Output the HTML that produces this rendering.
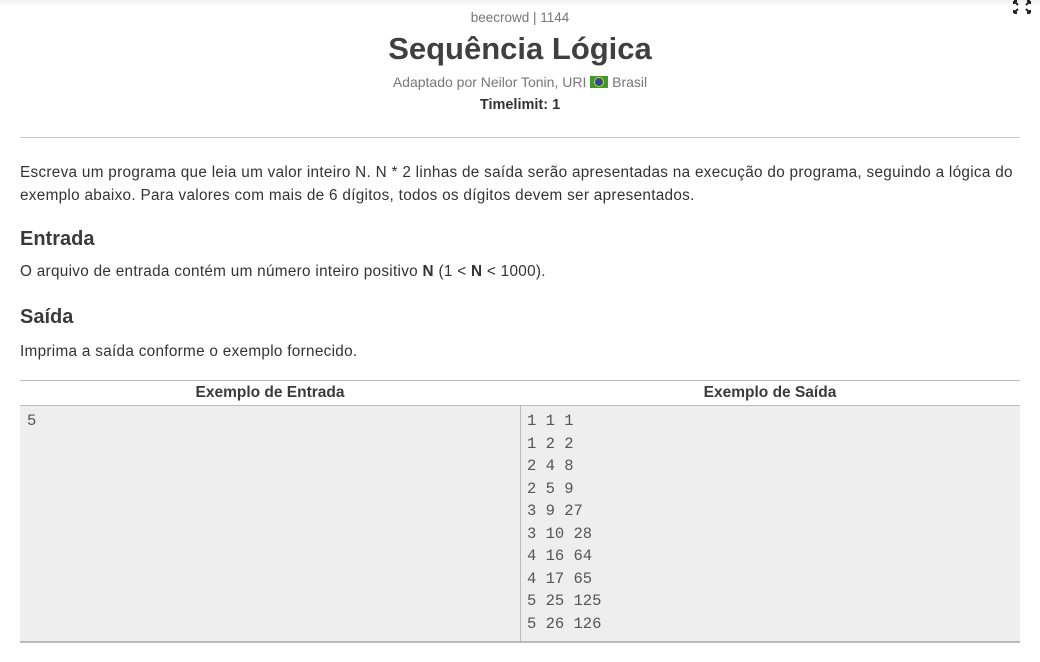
<!DOCTYPE html>
<html><head><meta charset="utf-8"><style>
*{margin:0;padding:0;box-sizing:border-box}
body{width:1040px;height:662px;overflow:hidden;background:#fff;font-family:"Liberation Sans",sans-serif;color:#333;position:relative}
.a{position:absolute;white-space:nowrap}
.c{left:0;width:1040px;text-align:center}
.p{font-size:15.3px;letter-spacing:0.3px;color:#333;left:20px}
h3{position:absolute;left:20px;font-size:20px;font-weight:bold;color:#3a3a3a}
.mono{font-family:"Liberation Mono",monospace;font-size:15.5px;color:#555;line-height:22.5px}
</style></head><body>
<div style="position:absolute;top:0;left:0;width:1040px;height:6px;background:linear-gradient(#f0f0f0,#fff)"></div>
<div class="a c" style="top:10px;font-size:13.5px;color:#777">beecrowd | 1144</div>
<div class="a c" style="top:31px;font-size:31px;font-weight:bold;color:#404040">Sequência Lógica</div>
<div class="a c" style="top:74px;font-size:14px;color:#777">Adaptado por Neilor Tonin, URI <span style="display:inline-block;width:18px;height:12px;background:#3a9a2a;position:relative;vertical-align:-1px"><span style="position:absolute;left:5px;top:2px;width:8px;height:8px;border-radius:50%;background:#2a4aa0;box-shadow:0 0 0 1px #e8d020"></span></span> Brasil</div>
<div class="a c" style="top:97px;font-size:14.5px;font-weight:bold;color:#333">Timelimit: 1</div>
<svg class="a" style="left:1013px;top:0" width="18" height="14" viewBox="0 0 18 14"><path d="M1 1l4 4M1 1h3M1 1v3M17 1l-4 4M17 1h-3M17 1v3M1 13l4-4M1 13h3M1 13v-3M17 13l-4-4M17 13h-3M17 13v-3" stroke="#222" stroke-width="2" fill="none"/></svg>
<div class="a" style="left:20px;top:137px;width:1000px;height:1px;background:#ccc"></div>
<div class="a p" style="top:161px;line-height:23px">Escreva um programa que leia um valor inteiro N. N * 2 linhas de saída serão apresentadas na execução do programa, seguindo a lógica do<br>exemplo abaixo. Para valores com mais de 6 dígitos, todos os dígitos devem ser apresentados.</div>
<h3 style="top:228px">Entrada</h3>
<div class="a p" style="top:263px">O arquivo de entrada contém um número inteiro positivo <b>N</b> (1 &lt; <b>N</b> &lt; 1000).</div>
<h3 style="top:306px">Saída</h3>
<div class="a p" style="top:343px">Imprima a saída conforme o exemplo fornecido.</div>
<div class="a" style="left:20px;top:380px;width:1000px;height:1px;background:#bbb"></div>
<div class="a" style="left:20px;top:384px;width:500px;text-align:center;font-size:15.5px;font-weight:bold;color:#3a3a3a">Exemplo de Entrada</div>
<div class="a" style="left:520px;top:384px;width:500px;text-align:center;font-size:15.5px;font-weight:bold;color:#3a3a3a">Exemplo de Saída</div>
<div class="a" style="left:20px;top:405px;width:1000px;height:238px;background:#eee;border-top:1px solid #bbb;border-bottom:2px solid #bbb"></div>
<div class="a" style="left:520px;top:406px;width:1px;height:235px;background:#bbb"></div>
<div class="a mono" style="left:27px;top:410px">5</div>
<div class="a mono" style="left:527px;top:410px">1 1 1<br>1 2 2<br>2 4 8<br>2 5 9<br>3 9 27<br>3 10 28<br>4 16 64<br>4 17 65<br>5 25 125<br>5 26 126</div>
</body></html>
